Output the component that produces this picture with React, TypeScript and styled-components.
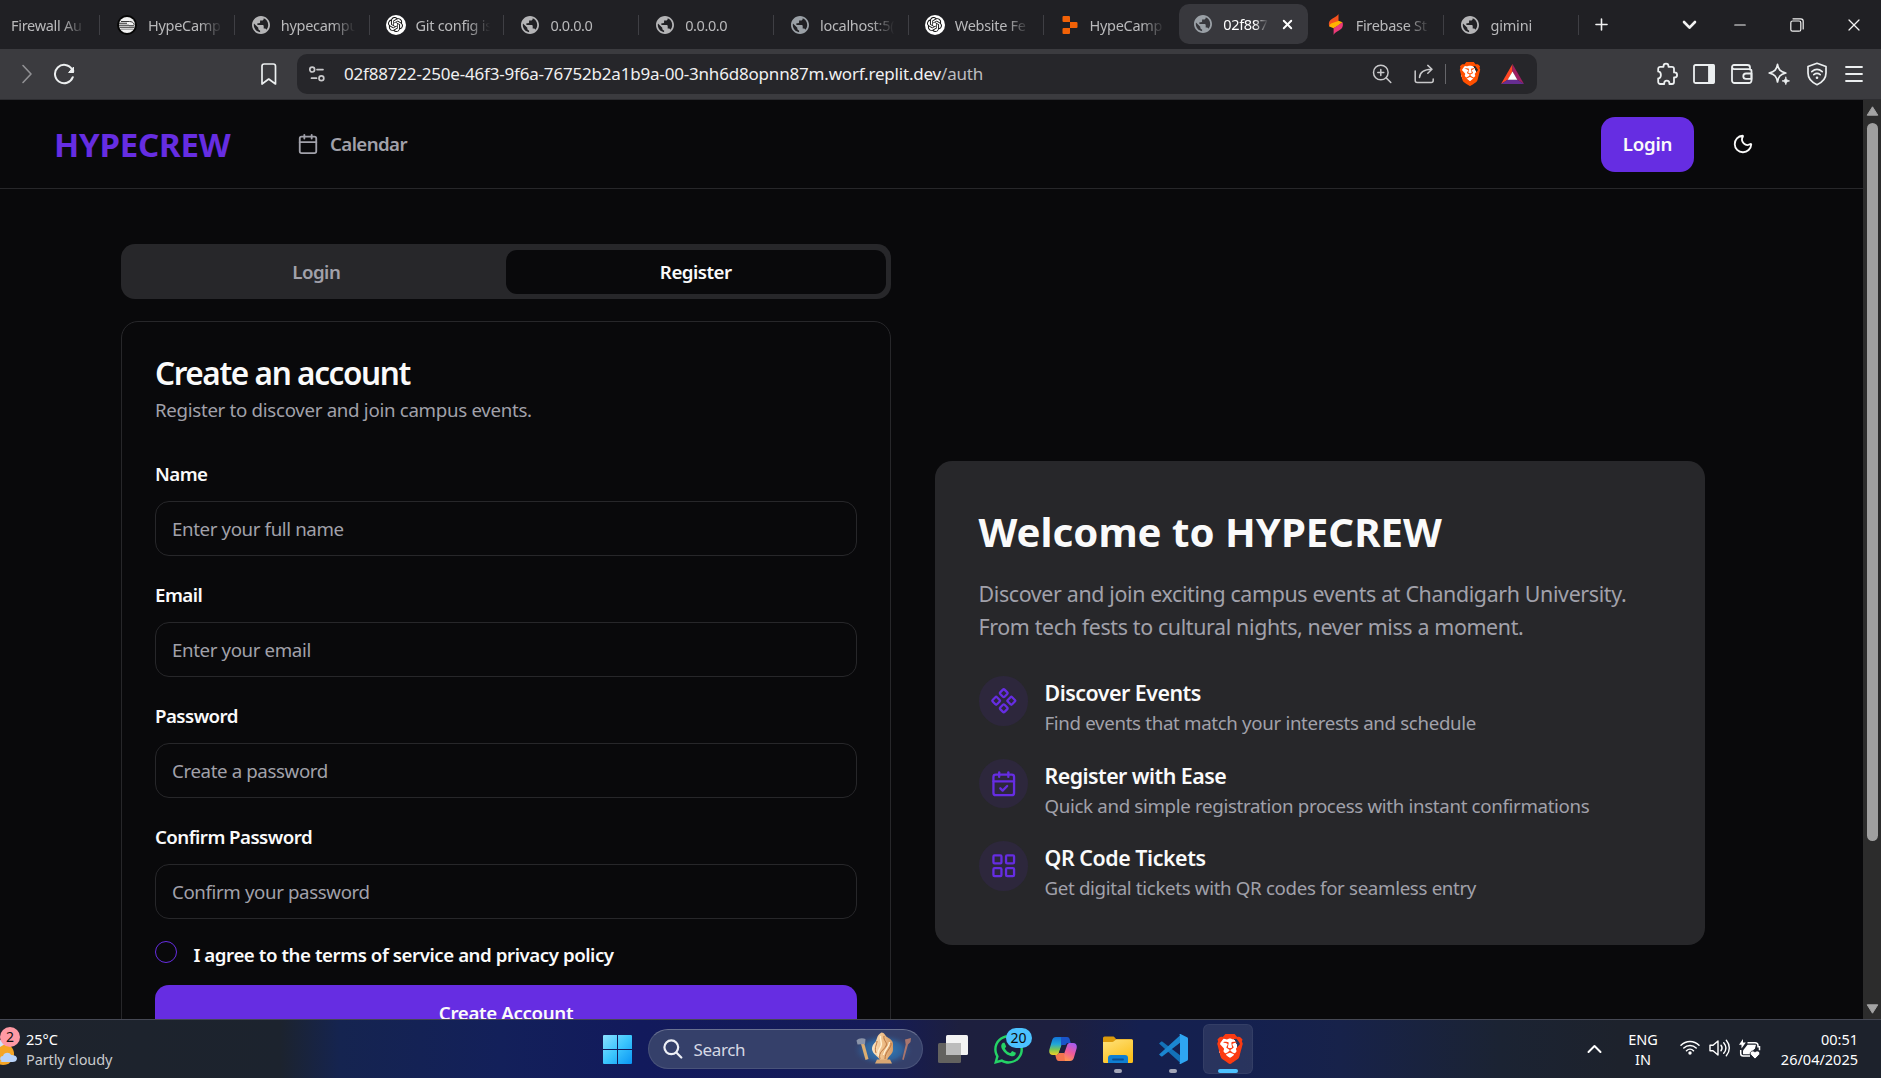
import React from "react";
import styled, { createGlobalStyle, css } from "styled-components";
import { Calendar, CalendarCheck, Component, LayoutGrid, Moon, X, Plus, Minus, Menu } from "lucide-react";
import { SiBrave, SiOpenai, SiReplit } from "react-icons/si";
import { FaWhatsapp } from "react-icons/fa";

const GlobalStyle = createGlobalStyle`
  *, *::before, *::after { box-sizing: border-box; }
  body {
    margin: 0;
    background: #09090b;
    overflow: hidden;
    font-family: "Noto Sans", "Open Sans", sans-serif;
  }
  svg { display: block; flex: none; }
`;

const Screen = styled.div`
  width: 1881px;
  height: 1078px;
  display: flex;
  flex-direction: column;
  overflow: hidden;
`;

/* ---------- Browser chrome ---------- */

const TabStrip = styled.div`
  height: 49px;
  flex: none;
  display: flex;
  align-items: center;
  background: #202024;
  color: #b9b9bb;
`;

const Tab = styled.div<{ $first?: boolean; $active?: boolean; $bare?: boolean }>`
  width: ${p => (p.$first ? 100 : 134.8)}px;
  flex: none;
  height: ${p => (p.$active ? 40 : 20)}px;
  display: flex;
  align-items: center;
  gap: 11px;
  padding-left: ${p => (p.$first ? 11 : 17)}px;
  border-right: 1px solid ${p => (p.$bare ? "transparent" : "#3f3f44")};
  ${p =>
    p.$active &&
    css`
      width: 129px;
      margin: -1px 1.5px 0 0.8px;
      padding: 0 13px 0 15px;
      border: 0;
      border-radius: 10px;
      background: #38383d;
      color: #fff;
    `}
`;

const TabTitle = styled.span<{ $ls?: number }>`
  flex: 1;
  max-width: 76px;
  white-space: nowrap;
  font-size: 14.5px;
  line-height: 20px;
  letter-spacing: ${p => p.$ls ?? -0.3}px;
  mask-image: linear-gradient(90deg, #000 68%, transparent 98%);
`;

const WindowControls = styled.div`
  flex: none;
  display: flex;
  align-items: center;
  color: #f2f2f2;
`;

const ControlSlot = styled.div<{ $w: number; $before?: number }>`
  width: ${p => p.$w}px;
  margin-left: ${p => p.$before ?? 0}px;
  display: flex;
  justify-content: center;
`;

const Toolbar = styled.div`
  height: 51px;
  flex: none;
  display: flex;
  align-items: center;
  background: #3b3b3f;
  border-bottom: 1px solid #2d2d31;
  color: #eceff0;
`;

const NavButtons = styled.div`
  width: 297px;
  display: flex;
  align-items: center;
  padding: 0 17px 0 18px;
  gap: 17px;
  & > :first-child { color: #919194; }
  & > :last-child { margin-left: auto; }
`;

const AddressBar = styled.div`
  width: 1240px;
  height: 40px;
  display: flex;
  align-items: center;
  padding: 0 13px 0 11px;
  background: #26262a;
  border-radius: 10px;
  color: #c9c9cb;
`;

const Url = styled.span`
  flex: 1;
  margin-left: 18px;
  font-size: 17px;
  line-height: 24px;
  letter-spacing: -0.19px;
  color: #f0f0f1;
  em { font-style: normal; color: #bdbdc0; }
`;

const AddressActions = styled.div`
  display: flex;
  align-items: center;
`;

const AddressGap = styled.span`
  width: 22px;
`;

const AddressDivider = styled.i`
  width: 1px;
  height: 20px;
  margin: 0 12px 0 10px;
  background: #66666a;
`;

const BraveMark = styled.span<{ $size: number; $color: string }>`
  display: grid;
  place-items: center;
  width: ${p => p.$size}px;
  color: ${p => p.$color};
  background: radial-gradient(ellipse 36% 40% at 50% 48%, #fff 96%, transparent 100%);
`;

const ExtensionBar = styled.div`
  flex: 1;
  display: flex;
  align-items: center;
  justify-content: flex-end;
  gap: 13.5px;
  padding-right: 15px;
`;

/* ---------- Page ---------- */

const Viewport = styled.div`
  height: 919px;
  flex: none;
  display: flex;
  overflow: hidden;
  background: #09090b;
`;

const Page = styled.div`
  width: 1863px;
  height: 919px;
  overflow: hidden;
`;

const SiteHeader = styled.header`
  height: 89px;
  display: flex;
  align-items: center;
  padding: 0 93px 0 54px;
  border-bottom: 1px solid #27272a;
`;

const Brand = styled.div`
  width: 243px;
  padding-top: 2px;
  font-size: 33px;
  line-height: 44px;
  font-weight: 700;
  letter-spacing: -0.2px;
  color: #662de2;
`;

const NavLink = styled.a`
  display: flex;
  align-items: center;
  gap: 11px;
  font-size: 18.7px;
  line-height: 28px;
  font-weight: 600;
  letter-spacing: -0.6px;
  color: #a1a1aa;
`;

const HeaderActions = styled.div`
  margin-left: auto;
  display: flex;
  gap: 21px;
`;

const button = css`
  border: 0;
  height: 55px;
  display: flex;
  align-items: center;
  justify-content: center;
  border-radius: 14px;
  font-family: inherit;
  font-size: 18.7px;
  font-weight: 600;
  color: #fafafa;
`;

const LoginButton = styled.button`
  ${button}
  width: 93px;
  padding: 0 0 2px;
  letter-spacing: -0.25px;
  background: #662de2;
`;

const ThemeButton = styled.button`
  ${button}
  width: 55px;
  padding: 0;
  background: transparent;
`;

const Main = styled.main`
  display: grid;
  grid-template-columns: 770px 770px;
  gap: 44px;
  align-items: center;
  padding: 55px 0 0 121px;
`;

const FormColumn = styled.section`
  display: flex;
  flex-direction: column;
  gap: 22px;
`;

const TabList = styled.div`
  height: 55px;
  display: grid;
  grid-template-columns: 1fr 1fr;
  padding: 5.5px;
  border-radius: 14px;
  background: #27272a;
`;

const TabTrigger = styled.div<{ $active?: boolean }>`
  display: flex;
  align-items: center;
  justify-content: center;
  border-radius: 11px;
  font-size: 18.7px;
  font-weight: 600;
  letter-spacing: -0.5px;
  color: ${p => (p.$active ? "#fafafa" : "#a1a1aa")};
  background: ${p => (p.$active ? "#09090b" : "transparent")};
`;

const Card = styled.div`
  height: 841px;
  padding: 33px;
  border: 1px solid #27272a;
  border-radius: 17px;
`;

const CardTitle = styled.h3`
  margin: 0;
  padding-top: 1px;
  font-size: 31.5px;
  line-height: 33px;
  font-weight: 600;
  letter-spacing: -1.4px;
  color: #fafafa;
`;

const CardHint = styled.p`
  margin: 7px 0 33px;
  font-size: 18.7px;
  line-height: 27.5px;
  letter-spacing: -0.3px;
  color: #a1a1aa;
`;

const Form = styled.form`
  display: flex;
  flex-direction: column;
  gap: 22px;
`;

const Field = styled.div`
  display: flex;
  flex-direction: column;
  gap: 10px;
`;

const Label = styled.label<{ $ls?: number }>`
  font-size: 18.7px;
  line-height: 34px;
  font-weight: 600;
  letter-spacing: ${p => p.$ls ?? -0.55}px;
  color: #fafafa;
`;

const Input = styled.input`
  width: 100%;
  height: 55px;
  padding: 0 16px;
  border: 1px solid #27272a;
  border-radius: 14px;
  background: #09090b;
  font: 400 18.7px "Noto Sans", "Open Sans", sans-serif;
  letter-spacing: -0.38px;
  color: #fafafa;
  outline: none;
  &::placeholder { color: #a1a1aa; opacity: 1; }
`;

const TermsRow = styled.div`
  height: 22px;
  display: flex;
  align-items: flex-start;
  gap: 16.5px;
  ${Label} { line-height: 28px; }
`;

const CheckCircle = styled.span`
  width: 22px;
  height: 22px;
  border: 1px solid #662de2;
  border-radius: 50%;
`;

const SubmitButton = styled.button`
  ${button}
  width: 100%;
  letter-spacing: -0.35px;
  background: #662de2;
`;

const WelcomePanel = styled.section`
  height: 484px;
  padding: 44px 44px 44px 43.5px;
  border-radius: 17px;
  background: #27272a;
`;

const WelcomeTitle = styled.h2`
  margin: 0 0 21px;
  padding-top: 2px;
  font-size: 40.2px;
  line-height: 49px;
  font-weight: 700;
  color: #fafafa;
`;

const WelcomeText = styled.p`
  margin: 0 0 33px;
  padding-top: 1px;
  font-size: 21.4px;
  line-height: 32.7px;
  letter-spacing: -0.36px;
  color: #a1a1aa;
`;

const FeatureList = styled.div`
  display: flex;
  flex-direction: column;
  gap: 22px;
`;

const Feature = styled.div`
  height: 60.5px;
  display: flex;
  align-items: flex-start;
  gap: 16.5px;
`;

const FeatureIcon = styled.span`
  width: 49.5px;
  height: 49.5px;
  display: grid;
  place-items: center;
  border-radius: 50%;
  background: #2d273c;
  color: #662de2;
`;

const FeatureTitle = styled.div<{ $ls: number }>`
  font-size: 21.4px;
  line-height: 33px;
  font-weight: 600;
  letter-spacing: ${p => p.$ls}px;
  color: #fafafa;
`;

const FeatureHint = styled.div`
  font-size: 18.7px;
  line-height: 27.5px;
  letter-spacing: -0.33px;
  color: #a1a1aa;
`;

const ScrollTrack = styled.div`
  width: 18px;
  display: flex;
  flex-direction: column;
  align-items: center;
  padding: 6px 0 5px;
  background: #2c2c2c;
`;

const ScrollThumb = styled.div`
  width: 11px;
  height: 718px;
  margin: 7px 0 auto;
  border-radius: 6px;
  background: #9f9f9f;
`;

/* ---------- Taskbar ---------- */

const Taskbar = styled.div`
  height: 59px;
  flex: none;
  display: grid;
  grid-template-columns: 589.5px 663px 1fr;
  border-top: 1px solid #454854;
  color: #fff;
  background: linear-gradient(
    90deg,
    #1e232c 0, #1c232e 280px, #152450 340px, #13205a 500px, #121a5c 640px, #141b57 880px,
    #1d1f3e 960px, #1d1f3f 1060px, #15204f 1140px, #14204f 1240px, #17224a 1340px, #1b2333 1500px, #1d222c 1620px, #1d222c 100%
  );
`;

const Weather = styled.div`
  display: flex;
  align-items: center;
  gap: 5px;
  padding-bottom: 1px;
`;

const WeatherIcon = styled.div`
  position: relative;
  width: 21px;
  height: 40px;
`;

const AlertBadge = styled.span`
  position: absolute;
  left: 0;
  top: -2px;
  width: 20px;
  height: 20px;
  border-radius: 50%;
  background: #ff99a4;
  color: #111;
  font-size: 14px;
  line-height: 20px;
  text-align: center;
`;

const WeatherSky = styled.svg`
  position: absolute;
  left: 0;
  top: 5px;
`;

const SmallLines = styled.div<{ $align?: string }>`
  font-size: 14.5px;
  line-height: 20px;
  text-align: ${p => p.$align ?? "left"};
  span { display: block; }
`;

const Muted = styled.span`
  color: #c8cacd;
  letter-spacing: -0.12px;
`;

const AppRow = styled.div`
  display: flex;
  align-items: center;
`;

const AppSlot = styled.div<{ $active?: boolean }>`
  position: relative;
  flex: none;
  width: ${p => (p.$active ? 50 : 55)}px;
  height: 50px;
  display: grid;
  place-items: center;
  ${p =>
    p.$active &&
    css`
      border-radius: 6px;
      background: rgba(255, 255, 255, 0.09);
      box-shadow: inset 0 0 0 1px rgba(255, 255, 255, 0.05);
      margin-left: 2px;
    `}
`;

const RunningMark = styled.i<{ $active?: boolean }>`
  position: absolute;
  bottom: 1px;
  left: 50%;
  width: ${p => (p.$active ? 20 : 8)}px;
  height: 4px;
  border-radius: 2px;
  transform: translateX(-50%);
  background: ${p => (p.$active ? "#4cc2ff" : "#a3a6b8")};
`;

const CountBadge = styled.span`
  position: absolute;
  left: 25px;
  top: 3.5px;
  width: 26px;
  height: 20px;
  border-radius: 10px;
  background: #4cc2ff;
  color: #0b0b0b;
  font-size: 14px;
  line-height: 20px;
  text-align: center;
`;

const SearchPill = styled.div`
  width: 275px;
  height: 40px;
  flex: none;
  margin: 0 3px;
  display: flex;
  align-items: center;
  padding: 0 8px 0 14px;
  border-radius: 20px;
  border: 1px solid rgba(255, 255, 255, 0.1);
  border-top-color: rgba(255, 255, 255, 0.26);
  background: #35406a;
`;

const SearchText = styled.span`
  flex: 1;
  margin-left: 11px;
  font-size: 17px;
  letter-spacing: -0.35px;
  color: #d5d8e4;
`;

const Tray = styled.div`
  display: flex;
  align-items: center;
  justify-content: flex-end;
  padding: 0 23px 1px 0;
`;

const TrayIcons = styled.div`
  display: flex;
  gap: 9px;
  margin: 0 20px 0 22px;
`;

const LanguageBox = styled.div`
  margin-left: 26px;
`;

/* ---------- Drawings ---------- */

const Globe = ({ color = "#b4b4b6" }: { color?: string }) => (
  <svg width="18" height="18" viewBox="2 2 20 20">
    <path fill={color} d="M12 2C6.480 2 2 6.480 2 12s4.480 10 10 10 10-4.480 10-10S17.520 2 12 2zm-1 17.930c-3.950-.490-7-3.850-7-7.930 0-.620.080-1.210.210-1.790L9 15v1c0 1.100.900 2 2 2v1.930zm6.900-2.540c-.260-.810-1-1.390-1.900-1.390h-1v-3c0-.550-.450-1-1-1H8v-2h2c.550 0 1-.450 1-1V7h2c1.100 0 2-.900 2-2v-.410c2.930 1.190 5 4.060 5 7.410 0 2.080-.800 3.970-2.100 5.390z" />
  </svg>
);

const GptFavicon = styled.span`
  width: 20px;
  height: 20px;
  margin: 0 -1px;
  display: grid;
  place-items: center;
  border-radius: 50%;
  background: #fff;
  color: #111;
`;

const ReplitFavicon = styled.span`
  width: 18px;
  display: grid;
  place-items: center;
  color: #f26207;
`;

const TrainIcon = () => (
  <svg width="20" height="20" viewBox="0 0 20 20">
    <circle cx="10" cy="10" r="10" fill="#060606" />
    <circle cx="10" cy="10" r="8" fill="#f1f1f1" />
    <path d="M4 6.500h8.500c2.300 0 3.900 1.100 4.700 2.700l-.6 1.500H12" fill="none" stroke="#3a3a3a" strokeWidth="1" />
    <path d="M2 8.300h8M2 10.200h10M2.500 12.300h15" stroke="#333" strokeWidth="1.100" />
    <path d="M4 14.200h12" stroke="#888" strokeWidth="1" />
  </svg>
);

const FirebaseStudio = () => (
  <svg width="18" height="21" viewBox="0 0 18 21">
    <path d="M11.500 0v6.800L2.300 12.600C1 8 3 5.800 6.400 4 9 2.700 10.700 1.600 11.500 0z" fill="#f4511e" />
    <path d="M2.300 12.600C2.400 10 4.500 8.900 7 8.500l4.500-1.700 4 1.500-4.500 3.500-4.400 2.400z" fill="#ffb300" />
    <path d="M6.600 21v-6.800l8.900-5.900c1.300 4.400-.6 6.600-4 8.500-2.600 1.400-4.100 2.600-4.900 4.200z" fill="#ec3a78" />
  </svg>
);

const stroke = { fill: "none", stroke: "currentColor", strokeLinecap: "round", strokeLinejoin: "round" } as const;

const Chevron = ({ d, w, h, sw = 2.2 }: { d: string; w: number; h: number; sw?: number }) => (
  <svg width={w} height={h} viewBox={`0 0 ${w} ${h}`} {...stroke} strokeWidth={sw}><path d={d} /></svg>
);

const RestoreIcon = () => (
  <svg width="14" height="14" viewBox="0 0 14 14" {...stroke} strokeWidth="1.200">
    <rect x="0.800" y="3" width="10" height="10.200" rx="1.800" />
    <path d="M3 .8h7.800a2.400 2.400 0 0 1 2.400 2.400v7.800" />
  </svg>
);

const ReloadIcon = () => (
  <svg width="23" height="22" viewBox="0 0 23 22" {...stroke} strokeWidth="2">
    <path d="M19.800 14.200A9.200 9.200 0 1 1 19 6.200" />
    <circle cx="19.300" cy="8" r="2" fill="currentColor" stroke="none" />
    <path d="M20.500 4.500v5h-4.500z" fill="currentColor" strokeWidth="1" />
  </svg>
);

const BookmarkIcon = () => (
  <svg width="21" height="22" viewBox="0 0 21 22" {...stroke} strokeWidth="1.700">
    <path d="M3 3.200a2.200 2.200 0 0 1 2.200-2.200h9.100a2.200 2.200 0 0 1 2.200 2.200V21l-6.800-5L3 21z" />
  </svg>
);

const TuneIcon = () => (
  <svg width="18" height="16" viewBox="0 0 18 16" {...stroke} strokeWidth="1.700">
    <circle cx="4.200" cy="3.600" r="2.400" /><path d="M9 3.600h6" />
    <circle cx="13.400" cy="12.200" r="2.400" /><path d="M3.500 12.200h5" />
  </svg>
);

const ZoomIcon = () => (
  <svg width="20" height="20" viewBox="0 0 20 20" {...stroke} strokeWidth="1.500">
    <circle cx="8.800" cy="8.500" r="7.300" /><path d="M14.200 13.900l4.600 4.600M8.800 5.500v6M5.800 8.500h6" />
  </svg>
);

const ShareIcon = () => (
  <svg width="21" height="20" viewBox="0 0 21 20" {...stroke} strokeWidth="1.500">
    <path d="M1.200 7v9.500a2 2 0 0 0 2 2h14a2 2 0 0 0 2-2V15" />
    <path d="M5.500 13.500c.2-5 3-8 12.300-8.300M13.800 1.400l4.200 3.800-4.200 4" />
  </svg>
);

const RewardsIcon = () => (
  <svg width="23" height="20" viewBox="0 0 23 20">
    <path d="M11.500 0L0 20l7-4.500 4.500-8z" fill="#ff4724" />
    <path d="M11.500 0L23 20l-7-4.500-4.500-8z" fill="#9e1f63" />
    <path d="M0 20h23l-7-4.500H7z" fill="#662d91" />
    <path d="M11.500 7.500L16.300 15.800H6.700z" fill="#fff" />
  </svg>
);

const PuzzleIcon = () => (
  <svg width="24" height="24" viewBox="0 0 24 24" {...stroke} strokeWidth="1.800">
    <path d="M3.200 9.300V6.800a2 2 0 0 1 2-2h3.300v-.6a2.500 2.500 0 0 1 5 0v.6H17a2 2 0 0 1 2 2v3.600h.6a2.500 2.500 0 0 1 0 5H19v4.600a2 2 0 0 1-2 2h-2.600v-.8a2.600 2.600 0 0 0-5.200 0v.8h-4a2 2 0 0 1-2-2v-3.700c3.600.3 3.600-6.600 0-6.900z" />
  </svg>
);

const PanelIcon = () => (
  <svg width="24" height="24" viewBox="0 0 24 24" {...stroke} strokeWidth="1.800">
    <rect x="2" y="3" width="20" height="18" rx="1.500" /><path d="M17 3h4a1 1 0 0 1 1 1v16a1 1 0 0 1-1 1h-4z" fill="currentColor" />
  </svg>
);

const WalletIcon = () => (
  <svg width="24" height="24" viewBox="0 0 24 24" {...stroke} strokeWidth="1.800">
    <path d="M20 7.500V5.500A2.500 2.500 0 0 0 17.500 3H4a2 2 0 0 0-2 2v13.500A2.500 2.500 0 0 0 4.500 21H19a2.500 2.500 0 0 0 2.500-2.500V9A1.800 1.800 0 0 0 19.700 7.200H4A2 2 0 0 1 2.200 5.500" />
    <path d="M21.500 11.500H16a2.700 2.700 0 0 0 0 5.400h5.500z" />
  </svg>
);

const SparkleIcon = () => (
  <svg width="24" height="24" viewBox="0 0 24 24" {...stroke} strokeWidth="1.700">
    <path d="M10.500 2.300c.9 5.200 2.700 7.300 8.300 8.700-5.600 1.400-7.400 3.500-8.300 9-.9-5.500-2.700-7.600-8.300-9 5.600-1.400 7.400-3.500 8.300-8.700z" />
    <path d="M18.800 15.200c.5 2.500 1.200 3.200 3.700 3.700-2.500.5-3.200 1.200-3.700 3.700-.5-2.500-1.200-3.200-3.700-3.700 2.500-.5 3.200-1.200 3.700-3.700z" fill="currentColor" strokeWidth=".8" />
  </svg>
);

const ShieldWifiIcon = () => (
  <svg width="24" height="24" viewBox="0 0 24 24" {...stroke} strokeWidth="1.700">
    <path d="M12 1.300l9 3.200v6.600c0 5-3.400 9.200-9 11.600-5.600-2.400-9-6.600-9-11.600V4.500z" />
    <path d="M6.800 9.600c3.200-2.700 7.200-2.700 10.400 0M8.800 12.700c2-1.600 4.400-1.600 6.400 0" />
    <circle cx="12" cy="15.800" r="1.300" fill="currentColor" stroke="none" />
  </svg>
);

const Triangle = ({ down }: { down?: boolean }) => (
  <svg width="13" height="10" viewBox="0 0 13 10"><path d={down ? "M1.200.8h10.600L6.500 9.200z" : "M1.200 9.200h10.600L6.500.8z"} fill="#a3a3a3" stroke="#a3a3a3" strokeWidth="1" strokeLinejoin="round" /></svg>
);

const WindowsLogo = () => (
  <svg width="29" height="29" viewBox="0 0 29 29">
    <defs><linearGradient id="win" x1="0" y1="0" x2="1" y2="1"><stop offset="0" stopColor="#8be0ff" /><stop offset=".5" stopColor="#3cc6fd" /><stop offset="1" stopColor="#0a95f5" /></linearGradient></defs>
    <path d="M1 0h13v14H0V1a1 1 0 0 1 1-1zM15 0h13a1 1 0 0 1 1 1v13H15zM0 15h14v14H1a1 1 0 0 1-1-1zM15 15h14v13a1 1 0 0 1-1 1H15z" fill="url(#win)" />
  </svg>
);

const SearchGlass = () => (
  <svg width="20" height="20" viewBox="0 0 20 20" fill="none" stroke="#eef0f6" strokeWidth="2.200" strokeLinecap="round"><circle cx="8.300" cy="8.300" r="6.900" /><path d="M13.300 13.500l5 5" /></svg>
);

const SculptureArt = () => (
  <svg width="60" height="36" viewBox="0 0 60 36">
    <defs>
      <radialGradient id="glow"><stop offset="0" stopColor="#2f86c6" /><stop offset=".6" stopColor="#2d6ba8" stopOpacity=".75" /><stop offset="1" stopColor="#35406a" stopOpacity="0" /></radialGradient>
      <linearGradient id="wood" x1="0" x2="1"><stop offset="0" stopColor="#fbe4c2" /><stop offset=".5" stopColor="#efc08a" /><stop offset="1" stopColor="#d79b63" /></linearGradient>
    </defs>
    <ellipse cx="29" cy="19" rx="31" ry="17" fill="url(#glow)" />
    <path d="M7 13l4.500 16 3-1L10 11.500z" fill="#dcae70" />
    <path d="M2.500 9.500c2-2.500 6-3 9-1.500l-.5 5-7.500.5z" fill="#8a93a8" />
    <path d="M51 8.500l6-1.500-.5 4-2.500 2.500-4.300 15.500-1.500-.5 3.500-15z" fill="#a8766e" />
    <path d="M27.500 1.500c3 0 3.500 3 5.500 4.500s6.500 3 6 8c-.3 3 .8 5-1 8-1.500 2.500-4 4-5 7H26c-1-3-6-5-7.500-9-1.300-3.600.5-6.500 2.500-8.500 2.500-2.500 1-7 6.500-10z" fill="url(#wood)" />
    <path d="M30 5c-1 5 4 6 2 10s-8 6-6 13M23 10c0 4-3 6-1 12M37 12c1 5-6 8-6 16" fill="none" stroke="#b87440" strokeWidth="1" />
    <path d="M26.500 5c-1 4 2 6 .5 10s-4.500 5-2.500 10M35.500 11c0 5-5 7-6 13" fill="none" stroke="#fff0d2" strokeWidth="1.400" />
    <path d="M23 28.500h13l2 4H21z" fill="#d9a873" />
  </svg>
);

const TaskViewIcon = () => (
  <svg width="30" height="28" viewBox="0 0 30 28">
    <rect x="0" y="8" width="23" height="20" rx="1.500" fill="#63625f" />
    <rect x="8" y="0" width="22" height="20" rx="1.500" fill="#f3f3f3" />
    <path d="M8 8h15v12H9.500A1.500 1.500 0 0 1 8 18.500z" fill="#bcbcbc" />
  </svg>
);

const CopilotIcon = () => (
  <svg width="28" height="26" viewBox="0 0 28 26">
    <defs>
      <linearGradient id="cpA" x1=".3" y1="0" x2=".3" y2="1"><stop offset="0" stopColor="#1272d8" /><stop offset=".4" stopColor="#21a7d8" /><stop offset=".7" stopColor="#7cc653" /><stop offset="1" stopColor="#f0cf26" /></linearGradient>
      <linearGradient id="cpB" x1=".7" y1="0" x2=".3" y2="1"><stop offset="0" stopColor="#a65cf0" /><stop offset=".5" stopColor="#ef5a9a" /><stop offset="1" stopColor="#ff9a4a" /></linearGradient>
    </defs>
    <path d="M7 1h8.500L9.800 17c-.5 1.500-1.300 2-3 2H4C.8 19-.3 16.500.4 13.500L3.200 4C3.900 2 5 1 7 1z" fill="url(#cpA)" />
    <path d="M21 25h-8.500l5.700-16c.5-1.500 1.300-2 3-2H24c3.200 0 4.300 2.500 3.600 5.500L24.800 22c-.7 2-1.800 3-3.800 3z" fill="url(#cpB)" />
    <path d="M12 1h6c2 0 2.600 1.500 3.200 4l.5 2h-2.200c-1.500 0-2.500.6-3 2H12z" fill="#1a54c9" />
    <path d="M16 25h-6c-2 0-2.600-1.500-3.200-4l-.5-2c1.800 0 3-.6 3.500-2H15z" fill="#f2744f" />
    <path d="M12.800 9h3.700l-2.400 8h-4.300z" fill="#1d1f3e" />
  </svg>
);

const FolderIcon = () => (
  <svg width="30" height="27" viewBox="0 0 30 27">
    <defs><linearGradient id="fold" x1="0" y1="0" x2=".6" y2="1"><stop offset="0" stopColor="#ffe27c" /><stop offset="1" stopColor="#fcc01c" /></linearGradient></defs>
    <path d="M0 2a1.600 1.600 0 0 1 1.600-1.600h8.200c1 0 1.500.4 2.200 1.300L13 3h15.500A1.500 1.500 0 0 1 30 4.500V10H0z" fill="#dc9a0b" />
    <path d="M0 6h9.500c1.500 0 2.500-2.500 4-2.500h15A1.500 1.500 0 0 1 30 5v20.500a1.500 1.500 0 0 1-1.500 1.500h-27A1.500 1.500 0 0 1 0 25.500z" fill="url(#fold)" />
    <path d="M5 27v-5a3 3 0 0 1 3-3h14a3 3 0 0 1 3 3v5z" fill="#0f7fd3" />
    <path d="M10 23.500h10" stroke="#0a4f93" strokeWidth="1.800" strokeLinecap="round" />
  </svg>
);

const VsCodeIcon = () => (
  <svg width="30" height="30" viewBox="0 0 30 30">
    <path d="M1 9.500l2-1.800c.5-.4 1-.4 1.500 0L23 22v7.500z" fill="#1372b8" />
    <path d="M1 20.500l2 1.800c.5.4 1 .4 1.500 0L23 8V.5z" fill="#1b86d0" />
    <path d="M21.500.3c.5-.4 1-.3 1.500 0l6 3c.7.3 1 .8 1 1.500v20.400c0 .7-.3 1.200-1 1.500l-6 3c-.5.3-1 .4-1.500 0L22 28V2z" fill="#2ea5f2" />
  </svg>
);

const WifiIcon = () => (
  <svg width="20" height="16" viewBox="0 0 20 16" {...stroke} strokeWidth="1.500">
    <path d="M1 6.200c5-5 13-5 18 0M3.800 9c3.500-3.400 8.900-3.400 12.400 0M6.500 11.700c2-1.900 5-1.900 7 0" /><circle cx="10" cy="14" r="1.700" fill="currentColor" stroke="none" />
  </svg>
);

const SpeakerIcon = () => (
  <svg width="21" height="18" viewBox="0 0 21 18" {...stroke} strokeWidth="1.400">
    <path d="M1 6.300h3L9 2v14l-5-4.300H1zM12 6.200c1.300 1.700 1.300 3.900 0 5.600M14.700 3.700c2.700 3.200 2.700 7.400 0 10.600M17.300 1.300c4 4.700 4 10.700 0 15.400" />
  </svg>
);

const BatteryIcon = () => (
  <svg width="22" height="20" viewBox="0 0 22 20">
    <path d="M4 0v3.500h2.800L2.500 9.500V5.800H0z" fill="#fff" />
    <path d="M8.500 3.700H16a3 3 0 0 1 3 3v1h1.500v3.500M1.700 11v3.500a2.500 2.500 0 0 0 2.500 2.500H11" fill="none" stroke="#fff" strokeWidth="1.500" />
    <path d="M8.500 5.800H17l-1 3.500-5 6H4V11.500z" fill="#fff" />
    <path d="M16 20l-4.200-4.200c-1.900-2.200 1.500-5.600 4.200-2.700 2.700-2.900 6.100.5 4.200 2.700z" fill="#fff" stroke="#1d222c" strokeWidth=".8" />
  </svg>
);

/* ---------- App ---------- */

const features = [
  { icon: Component, title: "Discover Events", hint: "Find events that match your interests and schedule", ls: -0.5 },
  { icon: CalendarCheck, title: "Register with Ease", hint: "Quick and simple registration process with instant confirmations", ls: -0.55 },
  { icon: LayoutGrid, title: "QR Code Tickets", hint: "Get digital tickets with QR codes for seamless entry", ls: -0.45 },
];

const fields = [
  ["Name", "Enter your full name"],
  ["Email", "Enter your email"],
  ["Password", "Create a password"],
  ["Confirm Password", "Confirm your password"],
];

const GptIcon = () => <GptFavicon><SiOpenai size={15} /></GptFavicon>;

export default function App() {
  return (
    <Screen>
      <GlobalStyle />
      <TabStrip>
        <Tab $first><TabTitle>Firewall Au</TabTitle></Tab>
        <Tab><TrainIcon /><TabTitle>HypeCamp</TabTitle></Tab>
        <Tab><Globe /><TabTitle>hypecampu</TabTitle></Tab>
        <Tab><GptIcon /><TabTitle>Git config is</TabTitle></Tab>
        <Tab><Globe /><TabTitle $ls={-0.4}>0.0.0.0</TabTitle></Tab>
        <Tab><Globe /><TabTitle $ls={-0.4}>0.0.0.0</TabTitle></Tab>
        <Tab><Globe color="#9aa0a6" /><TabTitle>localhost:5(</TabTitle></Tab>
        <Tab><GptIcon /><TabTitle>Website Fe</TabTitle></Tab>
        <Tab $bare><ReplitFavicon><SiReplit size={18} /></ReplitFavicon><TabTitle>HypeCamp</TabTitle></Tab>
        <Tab $active><Globe color="#9aa0a6" /><TabTitle>02f887</TabTitle><X size={15} strokeWidth={3} /></Tab>
        <Tab><FirebaseStudio /><TabTitle>Firebase St</TabTitle></Tab>
        <Tab><Globe /><TabTitle $ls={-0.2}>gimini</TabTitle></Tab>
        <WindowControls>
          <ControlSlot $w={44}><Plus size={19} strokeWidth={2} /></ControlSlot>
          <ControlSlot $w={52} $before={40}><Chevron w={15} h={10} d="M2 2l5.500 5.700L13 2" sw={2.600} /></ControlSlot>
          <ControlSlot $w={50}><Minus size={18} strokeWidth={1.500} /></ControlSlot>
          <ControlSlot $w={64}><RestoreIcon /></ControlSlot>
          <ControlSlot $w={50}><X size={20} strokeWidth={1.500} /></ControlSlot>
        </WindowControls>
      </TabStrip>
      <Toolbar>
        <NavButtons>
          <Chevron w={18} h={22} d="M5 2.500l8 8.500-8 8.500" sw={1.600} />
          <ReloadIcon />
          <BookmarkIcon />
        </NavButtons>
        <AddressBar>
          <TuneIcon />
          <Url>02f88722-250e-46f3-9f6a-76752b2a1b9a-00-3nh6d8opnn87m.worf.replit.dev<em>/auth</em></Url>
          <AddressActions>
            <ZoomIcon />
            <AddressGap />
            <ShareIcon />
            <AddressDivider />
            <BraveMark $size={21} $color="#ff5000"><SiBrave size={24} /></BraveMark>
            <AddressGap />
            <RewardsIcon />
          </AddressActions>
        </AddressBar>
        <ExtensionBar>
          <PuzzleIcon /><PanelIcon /><WalletIcon /><SparkleIcon /><ShieldWifiIcon /><Menu size={24} strokeWidth={1.800} />
        </ExtensionBar>
      </Toolbar>

      <Viewport>
        <Page>
          <SiteHeader>
            <Brand>HYPECREW</Brand>
            <NavLink><Calendar size={22} />Calendar</NavLink>
            <HeaderActions>
              <LoginButton>Login</LoginButton>
              <ThemeButton><Moon size={22} /></ThemeButton>
            </HeaderActions>
          </SiteHeader>
          <Main>
            <FormColumn>
              <TabList>
                <TabTrigger>Login</TabTrigger>
                <TabTrigger $active>Register</TabTrigger>
              </TabList>
              <Card>
                <CardTitle>Create an account</CardTitle>
                <CardHint>Register to discover and join campus events.</CardHint>
                <Form>
                  {fields.map(([label, placeholder]) => (
                    <Field key={label}>
                      <Label>{label}</Label>
                      <Input placeholder={placeholder} />
                    </Field>
                  ))}
                  <TermsRow>
                    <CheckCircle />
                    <Label $ls={-0.45}>I agree to the terms of service and privacy policy</Label>
                  </TermsRow>
                  <SubmitButton type="button">Create Account</SubmitButton>
                </Form>
              </Card>
            </FormColumn>
            <WelcomePanel>
              <WelcomeTitle>Welcome to HYPECREW</WelcomeTitle>
              <WelcomeText>
                Discover and join exciting campus events at Chandigarh University.<br />
                From tech fests to cultural nights, never miss a moment.
              </WelcomeText>
              <FeatureList>
                {features.map(({ icon: Icon, title, hint, ls }) => (
                  <Feature key={title}>
                    <FeatureIcon><Icon size={27.5} /></FeatureIcon>
                    <div>
                      <FeatureTitle $ls={ls}>{title}</FeatureTitle>
                      <FeatureHint>{hint}</FeatureHint>
                    </div>
                  </Feature>
                ))}
              </FeatureList>
            </WelcomePanel>
          </Main>
        </Page>
        <ScrollTrack>
          <Triangle />
          <ScrollThumb />
          <Triangle down />
        </ScrollTrack>
      </Viewport>

      <Taskbar>
        <Weather>
          <WeatherIcon>
            <WeatherSky width="20" height="34" viewBox="0 0 20 34">
              <circle cx="3" cy="20" r="11" fill="#f5a524" />
              <path d="M0 6c2 0 4 1 5 4l-5 3z" fill="#cfe2fb" />
              <path d="M2 27c-3-1-2-5 1-5 1-4 7-4 8-1 3 0 6 1 6 3.500S15 28 12.500 28H0z" fill="#b9d3f8" />
            </WeatherSky>
            <AlertBadge>2</AlertBadge>
          </WeatherIcon>
          <SmallLines><span>25°C</span><Muted>Partly cloudy</Muted></SmallLines>
        </Weather>
        <AppRow>
          <AppSlot><WindowsLogo /></AppSlot>
          <SearchPill><SearchGlass /><SearchText>Search</SearchText><SculptureArt /></SearchPill>
          <AppSlot><TaskViewIcon /></AppSlot>
          <AppSlot><FaWhatsapp size={33} color="#25d366" /><CountBadge>20</CountBadge></AppSlot>
          <AppSlot><CopilotIcon /></AppSlot>
          <AppSlot><FolderIcon /><RunningMark /></AppSlot>
          <AppSlot><VsCodeIcon /><RunningMark /></AppSlot>
          <AppSlot $active><BraveMark $size={26} $color="#fb3b12"><SiBrave size={30} /></BraveMark><RunningMark $active /></AppSlot>
        </AppRow>
        <Tray>
          <Chevron w={15} h={10} d="M1.500 8l6-6 6 6" sw={2} />
          <LanguageBox><SmallLines $align="center"><span>ENG</span><span>IN</span></SmallLines></LanguageBox>
          <TrayIcons><WifiIcon /><SpeakerIcon /><BatteryIcon /></TrayIcons>
          <SmallLines $align="right"><span>00:51</span><span>26/04/2025</span></SmallLines>
        </Tray>
      </Taskbar>
    </Screen>
  );
}
